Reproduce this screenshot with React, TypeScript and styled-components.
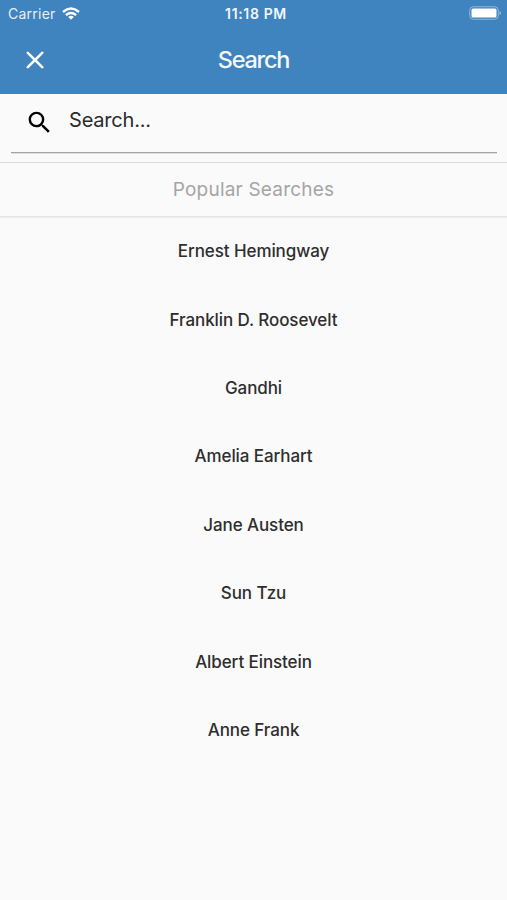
import React from "react";
import styled, { createGlobalStyle } from "styled-components";

const Global = createGlobalStyle`
  * { box-sizing: border-box; }
  body { margin: 0; background: #fafafa; font-family: Inter, sans-serif; }
`;
const Screen = styled.main`
  width: 507px; height: 900px; background: #fafafa; display: flex; flex-direction: column; overflow: hidden;
`;
const Header = styled.header`
  height: 94px; background: #3f83bf; color: #fff; flex: none;
`;
const StatusBar = styled.div`
  height: 27px; display: grid; grid-template-columns: 1fr auto 1fr; align-items: center; padding: 0 5px 0 8px;
`;
const Carrier = styled.div`
  display: flex; align-items: center; gap: 6px; font-size: 14px; letter-spacing: 0.25px; color: #e6eff7;
`;
const Clock = styled.div`
  font-size: 14px; font-weight: 600; letter-spacing: 0.65px; padding-left: 2px; color: #f0f6fb;
`;
const Battery = styled.svg`
  justify-self: end; display: block; margin-top: -1px;
`;
const NavBar = styled.div`
  height: 65px; display: grid; grid-template-columns: 70px 1fr 70px; align-items: center; justify-items: center;
`;
const Title = styled.h1`
  margin: 0; font-size: 23.5px; font-weight: 500; letter-spacing: -1.25px; color: #f4f9fd;
`;
const SearchField = styled.div`
  height: 59px; margin: 0 10px 0 11px; padding: 0 0 7px 14px; display: flex; align-items: center; border-bottom: 1px solid #a4a4a4; box-shadow: 0 1px #dedede; flex: none;
`;
const SearchIcon = styled.svg`
  margin-top: 6px;
`;
const Placeholder = styled.span`
  margin-left: 15px; font-size: 20px; color: #2b2b2b; letter-spacing: -0.2px;
`;
const SectionTitle = styled.h2`
  margin: 9px 0 0; height: 55px; border-top: 1px solid #dcdcdc; border-bottom: 1px solid #e6e6e6; box-shadow: 0 1px #ebebeb; font-size: 19px; font-weight: 400; color: #a5a5a5; letter-spacing: 0.2px; display: flex; align-items: center; justify-content: center; flex: none;
`;
const List = styled.ul`
  list-style: none; margin: 0; padding: 0;
`;
const Item = styled.li`
  height: 68.43px; display: flex; align-items: center; justify-content: center; font-size: 17px; font-weight: 500; letter-spacing: -0.09px; color: #2e2e2e;
`;

const names = ["Ernest Hemingway", "Franklin D. Roosevelt", "Gandhi", "Amelia Earhart", "Jane Austen", "Sun Tzu", "Albert Einstein", "Anne Frank"];

export default function App() {
  return (
    <Screen>
      <Global />
      <Header>
        <StatusBar>
          <Carrier>
            <span>Carrier</span>
            <svg width="18" height="13" viewBox="0 0 18 13" fill="none" stroke="#fff" strokeWidth="2.4">
              <path d="M1 5Q9-1.8 17 5M3.9 8.1Q9 3.9 14.1 8.1" />
              <path d="M6.2 10Q9 7.6 11.8 10L9 12.7Z" fill="#fff" stroke="none" />
            </svg>
          </Carrier>
          <Clock>11:18 PM</Clock>
          <Battery width="33" height="14" viewBox="0 0 33 14">
            <rect x=".75" y=".75" width="28.5" height="12.5" rx="3.5" fill="none" stroke="#fff" strokeOpacity=".42" />
            <rect x="2.5" y="2.5" width="25" height="9" rx="1.5" fill="#fff" />
            <path d="M30.5 5Q32 5.5 32 7T30.5 9Z" fill="#fff" fillOpacity=".5" />
          </Battery>
        </StatusBar>
        <NavBar>
          <svg width="18" height="18" viewBox="0 0 18 18" fill="none" stroke="#fff" strokeWidth="2.6" strokeLinecap="round"><path d="m1.8 1.8 14.4 14.4M16.2 1.8 1.8 16.2" /></svg>
          <Title>Search</Title>
        </NavBar>
      </Header>
      <SearchField>
        <SearchIcon width="29" height="29" viewBox="0 0 24 24" fill="#000"><path d="M15.5 14h-.79l-.28-.27A6.471 6.471 0 0 0 16 9.5 6.5 6.5 0 1 0 9.5 16c1.61 0 3.09-.59 4.23-1.57l.27.28v.79l5 4.99L20.49 19zm-6 0C7.01 14 5 11.99 5 9.5S7.01 5 9.5 5 14 7.01 14 9.5 11.99 14 9.5 14" /></SearchIcon>
        <Placeholder>Search...</Placeholder>
      </SearchField>
      <SectionTitle>Popular Searches</SectionTitle>
      <List>{names.map((name) => <Item key={name}>{name}</Item>)}</List>
    </Screen>
  );
}
